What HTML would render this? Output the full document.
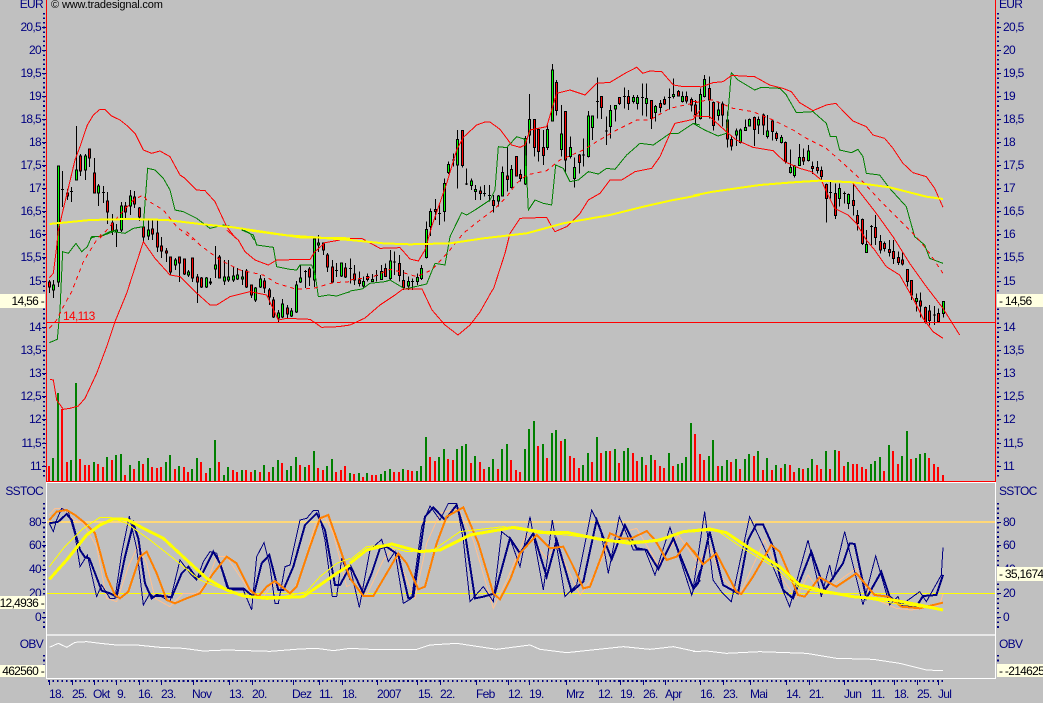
<!DOCTYPE html>
<html><head><meta charset="utf-8"><title>Chart</title>
<style>
html,body{margin:0;padding:0;background:#c0c0c0;width:1043px;height:703px;overflow:hidden}
svg{display:block;position:absolute;left:0;top:0}
path,polyline,line{vector-effect:non-scaling-stroke;shape-rendering:crispEdges}
polyline{fill:none}
text{font-family:"Liberation Sans",Arial,sans-serif;font-size:12px;letter-spacing:-.7px;fill:#000080}
.l text,.l{text-anchor:end}
.b text{fill:#000}
.d{stroke-dasharray:4 4}
</style></head><body>
<svg width="1043" height="703" viewBox="0 0 1043 703" xmlns="http://www.w3.org/2000/svg">
<rect width="1043" height="703" fill="#c0c0c0"/>

<!-- volume -->
<g fill="none" stroke-width="2">
<path stroke="#ff0000" d="M49 466V481M62 409V481M67 462V481M80 459V481M85 465V481M89 465V481M98 464V481M103 467V481M112 460V481M125 475V481M134 469V481M143 464V481M152 467V481M157 468V481M161 467V481M175 469V481M184 467V481M188 472V481M201 462V481M206 473V481M219 462V481M233 470V481M237 472V481M246 470V481M251 472V481M260 472V481M269 472V481M282 463V481M300 465V481M309 465V481M318 468V481M323 470V481M336 472V481M341 470V481M345 466V481"/>
<path stroke="#008000" d="M53 458V481M58 393V481M71 460V481M76 383V481M94 462V481M107 457V481M116 455V481M121 454V481M130 465V481M139 461V481M148 458V481M166 462V481M170 455V481M179 466V481M192 469V481M197 458V481M210 468V481M215 440V481M224 475V481M228 467V481M242 470V481M255 470V481M264 465V481M273 467V481M278 460V481M287 470V481M291 466V481M296 457V481M305 467V481M314 451V481M327 466V481M332 459V481"/>
<g transform="translate(350 380) scale(.33333)">
<path stroke="#008000" d="M0 279V303M27 279V303M51 279V303M93 282V303M105 273V303M120 267V303M159 267V303M201 273V303M213 258V303M228 171V303M267 231V303M282 207V303M321 207V303M336 198V303M348 192V303M375 228V303M417 261V303M429 237V303M456 207V303M471 192V303M525 207V303M537 147V303M552 123V303M579 192V303M606 159V303M618 150V303M645 177V303M699 255V303M714 219V303M741 171V303M768 213V303M795 207V303M822 213V303M834 204V303M876 231V303M903 225V303M957 219V303M984 252V303M996 249V303M1008 231V303M1023 129V303"/>
<path stroke="#ff0000" d="M12 282V303M39 291V303M66 285V303M78 285V303M132 276V303M147 276V303M174 270V303M186 273V303M240 231V303M255 243V303M294 237V303M309 240V303M363 249V303M390 246V303M402 267V303M444 267V303M483 240V303M498 270V303M510 276V303M564 198V303M591 234V303M633 183V303M660 228V303M672 234V303M687 264V303M726 246V303M753 219V303M780 213V303M807 249V303M849 219V303M861 243V303M888 255V303M915 240V303M930 258V303M942 264V303M969 258V303M1035 162V303"/>
</g>
<g transform="translate(693 380) scale(.33333)">
<path stroke="#ff0000" d="M21 222V303M33 240V303M75 258V303M114 246V303M141 267V303M183 228V303M210 270V303M237 270V303M264 264V303M291 255V303M303 276V303M330 267V303M372 255V303M384 267V303M411 267V303M438 213V303M453 258V303M480 252V303M492 252V303M507 261V303M519 267V303M573 273V303M600 213V303M615 252V303M654 237V303M708 234V303M723 252V303M735 261V303M750 285V303"/>
<path stroke="#008000" d="M48 228V303M60 180V303M87 258V303M102 240V303M129 237V303M156 237V303M168 222V303M195 213V303M222 234V303M249 255V303M276 252V303M318 264V303M345 264V303M357 237V303M399 213V303M426 210V303M465 246V303M534 252V303M546 243V303M561 231V303M588 195V303M627 228V303M642 153V303M669 234V303M681 222V303M696 219V303"/>
</g>
</g>

<!-- candles: section A -->
<g stroke="#000" stroke-width="1">
<path fill="none" d="M49.5 280V293M53.5 280V298M58.5 166V287M62.5 171V207M61 189.5h3M67.5 189V200M71.5 187V202M70 191.5h3M76.5 126V180M80.5 154V176M85.5 154V180M89.5 149V167M94.5 158V193M98.5 184V206M103.5 186V203M102 192.5h3M107.5 192V224M112.5 214V235M116.5 224V247M121.5 202V232M125.5 202V218M130.5 190V215M134.5 191V208M139.5 207V221M143.5 220V243M148.5 220V240M152.5 220V240M157.5 220V252M161.5 237V258M166.5 248V262M170.5 257V275M175.5 258V270M179.5 257V282M184.5 259V275M188.5 270V277M192.5 258V282M197.5 274V303M201.5 277V288M206.5 277V288M210.5 278V285M215.5 246V278M219.5 255V278M224.5 260V285M228.5 260V282M233.5 267V282M237.5 268V280M242.5 270V285M246.5 269V288M251.5 285V298M255.5 287V302M260.5 275V288M264.5 278V293M269.5 288V305M273.5 297V318M278.5 310V322M282.5 299V318M287.5 305V318M291.5 308V317M296.5 281V313M300.5 265V283M305.5 270V288M304 271.5h3M309.5 267V286M314.5 239V287M318.5 235V252M323.5 243V255M327.5 253V272M332.5 260V283M336.5 263V277M335 270.5h3M341.5 263V277M345.5 263V278"/>
<path fill="#ff0000" d="M48.5 282h2V287h-2zM66.5 193h2V196h-2zM79.5 156h2V171h-2zM88.5 149h2V158h-2zM93.5 173h2V193h-2zM106.5 201h2V212h-2zM111.5 223h2V231h-2zM124.5 206h2V212h-2zM133.5 197h2V204h-2zM138.5 208h2V217h-2zM142.5 227h2V237h-2zM151.5 229h2V234h-2zM156.5 233h2V247h-2zM160.5 246h2V251h-2zM165.5 251h2V253h-2zM169.5 257h2V272h-2zM178.5 257h2V263h-2zM183.5 259h2V274h-2zM191.5 258h2V278h-2zM196.5 277h2V282h-2zM200.5 278h2V287h-2zM218.5 257h2V278h-2zM245.5 271h2V287h-2zM250.5 285h2V295h-2zM263.5 281h2V288h-2zM268.5 290h2V297h-2zM272.5 300h2V317h-2zM286.5 308h2V314h-2zM308.5 269h2V277h-2zM322.5 243h2V250h-2zM326.5 255h2V267h-2zM331.5 267h2V282h-2zM344.5 268h2V277h-2z"/>
<path fill="#00ff00" d="M52.5 285h2V290h-2zM57.5 166h2V282h-2zM75.5 170h2V180h-2zM84.5 156h2V170h-2zM97.5 186h2V193h-2zM115.5 230h2V232h-2zM120.5 206h2V230h-2zM129.5 196h2V206h-2zM147.5 230h2V236h-2zM174.5 260h2V265h-2zM187.5 272h2V275h-2zM205.5 278h2V287h-2zM209.5 282h2V283h-2zM214.5 265h2V269h-2zM223.5 277h2V281h-2zM227.5 277h2V280h-2zM232.5 276h2V280h-2zM236.5 275h2V279h-2zM241.5 277h2V279h-2zM254.5 288h2V300h-2zM259.5 279h2V287h-2zM277.5 313h2V318h-2zM281.5 304h2V317h-2zM290.5 311h2V316h-2zM295.5 285h2V312h-2zM299.5 278h2V282h-2zM313.5 239h2V280h-2zM317.5 243h2V245h-2zM340.5 263h2V276h-2z"/>

<!-- section B -->
<g transform="translate(0 50) scale(1 .33333)">
<path fill="none" d="M350.5 625V700M349 655h3M354.5 645V705M359.5 665V710M363.5 680V715M367.5 670V695M372.5 672V695M376.5 660V695M375 677h3M381.5 645V690M385.5 640V680M390.5 600V690M394.5 605V675M393 636h3M399.5 615V695M403.5 660V720M408.5 680V720M412.5 685V720M411 695h3M417.5 670V705M421.5 645V690M426.5 515V625M430.5 475V558M435.5 447V510M439.5 465V525M438 490h3M444.5 385V515M448.5 335V372M453.5 310V350M452 330h3M457.5 240V415M462.5 240V352M466.5 355V405M465 402h3M471.5 385V420M475.5 405V450M480.5 410V450M484.5 405V440M483 430h3M489.5 405V455M488 437h3M493.5 435V488M498.5 435V470M502.5 350V440M507.5 290V425M511.5 345V415M516.5 320V380M520.5 358V395M525.5 258V405M529.5 132V280M534.5 208V320M538.5 238V335M543.5 240V345M547.5 225V300M552.5 42V215M556.5 90V197M561.5 165V320M565.5 185V370M570.5 260V325M574.5 322V412M579.5 312V370M583.5 265V350M582 315h3M588.5 183V322M592.5 198V270M597.5 82V205M596 155h3M601.5 140V207M606.5 200V285M605 243h3M610.5 165V265M615.5 165V215M619.5 143V165M624.5 112V175M623 140h3M628.5 120V180M633.5 135V160M637.5 135V178M642.5 100V197M641 142h3M646.5 100V200M651.5 150V237M655.5 165V215M660.5 150V187M664.5 140V165M669.5 115V178M668 142h3M673.5 85V145M678.5 120V140M682.5 125V158M686.5 125V160M691.5 143V185M695.5 150V225"/>
<path fill="#ff0000" d="M353.5 672h2V690h-2zM358.5 690h2V700h-2zM366.5 680h2V688h-2zM384.5 655h2V680h-2zM398.5 640h2V677h-2zM402.5 692h2V712h-2zM434.5 478h2V485h-2zM461.5 242h2V347h-2zM479.5 423h2V430h-2zM492.5 452h2V467h-2zM506.5 378h2V388h-2zM515.5 320h2V378h-2zM519.5 373h2V385h-2zM533.5 208h2V292h-2zM537.5 238h2V304h-2zM542.5 292h2V317h-2zM555.5 97h2V182h-2zM564.5 185h2V330h-2zM578.5 315h2V338h-2zM600.5 140h2V172h-2zM618.5 143h2V160h-2zM627.5 140h2V160h-2zM650.5 152h2V205h-2zM659.5 160h2V172h-2zM663.5 148h2V162h-2zM677.5 125h2V138h-2zM685.5 140h2V153h-2zM690.5 148h2V165h-2zM694.5 165h2V193h-2z"/>
<path fill="#00ff00" d="M362.5 695h2V708h-2zM371.5 688h2V695h-2zM380.5 665h2V688h-2zM389.5 633h2V685h-2zM407.5 695h2V708h-2zM416.5 682h2V695h-2zM420.5 655h2V685h-2zM425.5 538h2V622h-2zM429.5 485h2V530h-2zM443.5 400h2V485h-2zM447.5 343h2V368h-2zM456.5 268h2V345h-2zM470.5 393h2V407h-2zM474.5 418h2V425h-2zM497.5 438h2V453h-2zM501.5 367h2V438h-2zM510.5 358h2V413h-2zM524.5 265h2V402h-2zM528.5 208h2V255h-2zM546.5 238h2V292h-2zM551.5 60h2V213h-2zM560.5 252h2V298h-2zM569.5 292h2V320h-2zM573.5 352h2V385h-2zM587.5 198h2V320h-2zM591.5 198h2V233h-2zM609.5 182h2V230h-2zM614.5 167h2V177h-2zM632.5 142h2V155h-2zM636.5 142h2V160h-2zM645.5 145h2V160h-2zM654.5 170h2V187h-2zM672.5 133h2V140h-2zM681.5 140h2V155h-2z"/>
</g>

<!-- section C -->
<g transform="translate(0 60) scale(1 .33333)">
<path fill="none" d="M700.5 85V178M704.5 45V112M709.5 50V175M713.5 125V212M718.5 125V182M722.5 125V200M727.5 155V263M731.5 230V272M736.5 205V258M740.5 205V250M745.5 178V212M749.5 175V200M754.5 170V258M758.5 170V222M763.5 160V225M767.5 165V235M772.5 180V242M776.5 215V243M781.5 225V250M785.5 245V310M790.5 268V340M794.5 315V352M799.5 252V318M803.5 265V315M808.5 255V305M812.5 305V342M817.5 303V340M821.5 320V360M826.5 370V488M830.5 360V415M829 398h3M835.5 370V477M839.5 370V440M844.5 395V430M843 400h3M848.5 400V447M853.5 370V467M857.5 450V512M862.5 475V555M866.5 510V578M871.5 495V555M870 500h3M875.5 465V555M880.5 525V580M884.5 545V575M889.5 540V590M893.5 540V612M898.5 575V615M902.5 578V616M907.5 628V680M911.5 662V720M916.5 700V755M920.5 697V773M925.5 740V790M929.5 735V797M934.5 738V795M933 765h3M938.5 745V787M943.5 725V772"/>
<path fill="#ff0000" d="M708.5 85h2V120h-2zM712.5 127h2V197h-2zM721.5 132h2V165h-2zM726.5 180h2V237h-2zM730.5 238h2V258h-2zM753.5 172h2V208h-2zM762.5 165h2V195h-2zM771.5 183h2V215h-2zM775.5 220h2V235h-2zM784.5 247h2V305h-2zM802.5 293h2V303h-2zM811.5 320h2V326h-2zM816.5 322h2V332h-2zM820.5 332h2V350h-2zM825.5 373h2V415h-2zM834.5 400h2V467h-2zM852.5 422h2V437h-2zM856.5 467h2V490h-2zM861.5 478h2V550h-2zM874.5 503h2V532h-2zM879.5 545h2V570h-2zM883.5 550h2V565h-2zM888.5 568h2V578h-2zM892.5 575h2V595h-2zM897.5 593h2V607h-2zM901.5 600h2V612h-2zM906.5 628h2V665h-2zM910.5 662h2V705h-2zM919.5 723h2V738h-2zM924.5 742h2V785h-2zM928.5 753h2V782h-2zM937.5 760h2V785h-2z"/>
<path fill="#00ff00" d="M699.5 103h2V175h-2zM703.5 58h2V110h-2zM717.5 150h2V167h-2zM735.5 213h2V225h-2zM739.5 210h2V248h-2zM744.5 202h2V212h-2zM748.5 178h2V198h-2zM757.5 178h2V195h-2zM766.5 213h2V230h-2zM780.5 232h2V248h-2zM789.5 322h2V337h-2zM793.5 318h2V347h-2zM798.5 293h2V317h-2zM807.5 273h2V302h-2zM838.5 385h2V415h-2zM847.5 403h2V430h-2zM865.5 553h2V577h-2zM915.5 715h2V725h-2zM942.5 725h2V760h-2z"/>
</g>
</g>

<!-- price overlays: green -->
<g stroke="#008000" stroke-width="1" fill="none">
<polyline transform="translate(0 230) scale(.33333)" points="148,338 172,328 180,240 188,65 205,70 228,40 245,65 262,50 275,20 300,20 330,5 350,0"/>
<polyline transform="scale(.33333)" points="270,715 285,710 300,710 340,695 375,700 400,685 430,680 435,610 443,505 465,510 490,535 510,570 525,630 550,635 590,655 630,685 670,675 720,685 750,700 762,720"/>
<polyline transform="translate(0 230) scale(.33333)" points="725,0 760,15 770,45 820,52 830,110 870,118 890,120 900,105 935,105 945,130 955,200 985,195 1010,198 1050,185"/>
<polyline points="350,291 362,289"/>
<polyline transform="translate(350 50) scale(.33333)" points="35,718 60,700 105,695 120,690 150,708 165,717 230,702 255,640 285,645 300,560 335,488 350,495 375,480 420,450 435,420 445,290 470,293 500,260 525,268 535,480 555,450 580,460 605,465 617,345 640,355 660,395 685,390 715,365 745,372 770,355 795,358 830,315 870,280 910,285 960,250 985,250 1030,220 1050,225"/>
<polyline transform="translate(693 60) scale(.33333)" points="0,190 35,210 75,228 100,220 115,38 135,60 185,90 205,82 260,85 280,105 310,158 360,155 400,190 412,230 430,230 440,270 475,278 495,268 510,290 520,340 560,345 590,385 640,440 665,530 695,555 710,595 750,610"/>
</g>
<!-- price overlays: red -->
<g stroke="#ff0000" stroke-width="1" fill="none">
<polyline transform="scale(.33333)" points="175,690 225,480 240,440 262,375 280,345 300,328 315,328 335,348 360,360 385,380 405,400 430,450 455,460 480,453 510,470 540,525 555,535 590,570 615,572 645,605 680,680 707,715"/>
<polyline transform="translate(0 230) scale(.33333)" points="148,143 160,130 170,50 175,0"/>
<polyline transform="translate(0 230) scale(.33333)" points="680,0 715,30 735,65 765,90 805,105 830,90 930,88 945,65 975,38 1020,30 1050,28"/>
<polyline transform="translate(350 50) scale(.33333)" points="0,565 35,565 90,595 150,593 180,627 205,633 225,600 245,530 290,400 320,300 340,262 380,225 405,216 420,216 450,238 485,285 510,292 525,285 540,240 590,230 605,180 620,130 660,120 705,135 740,100 780,97 825,70 860,52 878,70 900,63 935,65 970,105 1000,110 1050,110"/>
<polyline transform="translate(693 60) scale(.33333)" points="21,82 60,68 90,65 115,47 130,47 185,50 230,75 270,85 295,95 320,128 360,152 400,135 428,130 480,183 520,200 540,225 575,235 600,265 630,310 660,338 700,350 725,385 750,442"/>
<polyline transform="translate(0 230) scale(.33333)" points="150,448 160,450 170,510 190,538 210,535 235,528 255,505 290,430 320,350 345,275 380,190 430,35 465,85 510,135 540,140 580,180 630,225 650,225 690,200 750,185 800,195 835,270 860,265 930,268 965,292 1015,290 1050,285"/>
<polyline points="350,325 365,318 380,305 395,295 403,289 422,289 432,310 445,325 458,335 470,325 480,312 493,289"/>
<polyline transform="translate(350 50) scale(.33333)" points="430,718 465,610 480,550 510,505 590,502 605,530 615,545 650,530 690,490 715,450 750,430 780,390 815,390 855,365 905,355 930,320 965,240 975,220 1030,208 1050,180"/>
<polyline transform="translate(693 60) scale(.33333)" points="0,168 50,170 100,215 130,240 180,262 240,272 275,305 320,325 355,335 385,360 400,395 425,445 465,465 490,490 520,540 545,570 580,620 620,645 660,715 690,775 720,815 750,835"/>
<polyline transform="translate(693 60) scale(.33333)" points="480,370 550,460 600,530 650,610 700,680 750,745 800,825"/>
<g class="d">
<polyline class="d" transform="translate(0 230) scale(.33333)" points="148,295 170,270 190,230 215,185 250,95 290,30 310,5"/>
<polyline class="d" transform="scale(.33333)" points="300,715 345,660 400,600 430,585 440,600 490,630 530,680 580,720"/>
<polyline class="d" transform="translate(0 230) scale(.33333)" points="560,5 600,45 660,90 720,120 790,135 830,160 890,178 940,175 1000,158 1050,155"/>
<polyline class="d" transform="translate(350 50) scale(.33333)" points="0,690 70,680 120,658 150,665 200,680 245,660 300,600 340,550 390,510 430,480 470,440 500,400 530,375 590,362 630,330 700,300 740,275 800,240 860,210 900,210 960,175 1050,155"/>
<polyline class="d" transform="translate(693 60) scale(.33333)" points="0,125 60,120 120,145 180,155 240,180 300,210 340,235 400,265 450,310 500,355 560,420 620,480 670,530 710,580 750,640"/>
</g>
</g>
<!-- yellow MA -->
<g stroke="#ffff00" stroke-width="2" fill="none">
<polyline transform="scale(.33333)" points="148,672 200,667 270,660 390,657 500,660 600,672 700,682 800,697 900,712 1050,715"/>
<polyline transform="translate(0 230) scale(.33333)" points="740,0 850,15 1050,30"/>
<polyline transform="translate(350 50) scale(.33333)" points="0,570 100,580 180,583 300,580 400,565 530,550 640,520 780,495 880,470 960,452 1050,435"/>
<polyline transform="translate(693 60) scale(.33333)" points="0,407 60,395 200,375 300,367 380,362 480,367 590,382 700,410 750,417"/>
</g>

<!-- frame lines -->
<g fill="none">
<path stroke="#fff" stroke-width="1" d="M46.5 481V678M995.5 481V678M46 482.5H996M46 678.5H996"/>
<path stroke="#e8e8e8" stroke-width="2" d="M47 635H995"/>
<path stroke="#ff0000" stroke-width="1" d="M46.5 0V481M995.5 0V481M46 481.5H996M46 322.5H996"/>
<path stroke="#ffd878" stroke-width="2" d="M47 522H995"/>
<path stroke="#ffff00" stroke-width="1" d="M47 593.5H995"/>
</g>

<!-- stochastic -->
<g fill="none">
<g stroke="#ffc090" stroke-width="1">
<polyline transform="translate(0 470) scale(.33333)" points="148,135 165,115 190,115 215,145 250,160 290,230 320,385 350,395 385,290 415,225 440,280 465,385 510,410 550,370 590,370 620,340 650,260 680,260 720,320 760,380 790,380 820,340 860,360 880,365 910,290 945,165 975,140 1000,190 1040,350 1050,345"/>
<polyline transform="translate(350 470) scale(.33333)" points="0,295 50,375 100,270 130,235 195,385 230,220 270,130 325,115 370,210 430,415 475,320 530,190 590,265 620,225 690,375 730,320 790,195 860,175 925,285 985,195 1045,280"/>
<polyline transform="translate(693 470) scale(.33333)" points="0,300 50,230 85,320 140,375 215,210 270,330 310,385 345,315 385,370 490,295 540,385 610,415 655,420 740,405 750,372"/>
</g>
<g stroke="#000080" stroke-width="1">
<polyline transform="translate(0 470) scale(.33333)" points="148,160 160,185 170,150 185,115 205,125 225,195 240,290 262,255 290,380 305,345 330,385 345,385 365,250 388,138 410,235 430,405 450,370 460,380 485,380 510,395 540,270 570,310 590,330 610,275 630,245 650,250 680,350 700,360 730,360 755,420 770,260 792,218 810,290 825,400 835,400 855,290 870,285 900,150 920,145 940,122 955,122 975,210 997,380 1010,380 1025,265 1050,330"/>
<polyline transform="translate(350 470) scale(.33333)" points="0,290 28,412 60,240 95,208 115,275 135,245 160,400 185,385 215,170 240,108 270,150 295,100 320,100 340,210 360,395 400,350 430,395 455,185 480,205 510,290 540,140 580,360 607,150 645,380 680,345 725,120 750,170 775,310 808,140 850,240 885,240 915,315 960,172 1025,375 1050,300"/>
<polyline transform="translate(693 470) scale(.33333)" points="0,360 35,125 60,330 85,365 115,395 170,140 240,290 290,410 345,210 385,380 410,285 420,330 455,185 510,405 548,258 590,405 615,380 625,405 680,365 700,395 745,315 750,232"/>
</g>
<g stroke="#000080" stroke-width="2">
<polyline transform="translate(0 470) scale(.33333)" points="148,160 175,155 200,132 215,150 240,240 255,262 268,265 305,362 330,370 350,380 375,260 400,160 415,205 435,340 455,385 470,375 515,382 545,310 565,290 590,325 605,315 640,245 660,280 685,355 730,355 760,380 785,280 808,255 835,360 850,360 880,290 915,165 950,130 975,180 1005,345 1020,345 1050,290"/>
<polyline transform="translate(350 470) scale(.33333)" points="0,285 40,370 65,310 90,235 110,230 145,255 175,385 190,380 225,140 250,112 285,150 320,105 345,190 375,385 400,380 435,370 480,205 510,250 550,190 590,320 620,210 665,365 700,335 740,150 785,268 825,165 860,235 890,240 925,297 970,205 1030,355 1050,330"/>
<polyline transform="translate(693 470) scale(.33333)" points="0,358 15,340 50,185 90,345 135,370 165,210 190,163 210,163 240,230 270,360 300,385 355,245 395,360 450,280 470,220 485,222 520,385 565,305 590,380 630,410 670,410 690,378 730,375 750,315"/>
</g>
<g stroke="#ff8000" stroke-width="2">
<polyline transform="translate(0 470) scale(.33333)" points="148,150 170,125 200,120 225,135 250,155 285,190 320,320 345,375 360,385 385,365 420,260 440,245 470,310 500,390 525,400 560,385 600,370 640,310 680,260 710,280 750,360 775,380 800,350 825,333 870,370 890,350 930,230 960,145 985,135 1020,235 1050,325"/>
<polyline transform="translate(350 470) scale(.33333)" points="0,325 40,378 70,378 110,310 145,250 170,280 205,358 225,350 260,220 290,140 340,112 385,220 430,370 450,388 480,330 510,250 560,195 600,235 640,230 670,290 700,355 720,350 750,270 780,190 815,205 845,205 890,183 915,210 950,270 980,260 1010,220 1050,270"/>
<polyline transform="translate(693 470) scale(.33333)" points="0,240 30,283 70,250 130,365 145,372 180,320 235,225 260,245 315,375 335,380 380,322 430,350 490,310 545,375 585,380 625,410 680,415 750,398"/>
</g>
<g stroke="#ffff00" stroke-width="1">
<polyline transform="translate(0 470) scale(.33333)" points="148,290 190,235 250,175 300,142 330,142 380,160 450,210 520,265 600,330 700,370 760,380 850,380 920,365 960,320 1010,280 1050,265"/>
<polyline transform="translate(350 470) scale(.33333)" points="0,270 50,230 100,225 170,245 250,240 330,185 460,170 570,190 650,195 770,210 900,215 1000,185 1050,180"/>
<polyline transform="translate(693 470) scale(.33333)" points="0,185 70,180 150,235 250,295 320,355 400,370 500,382 600,400 680,410 750,422"/>
</g>
<g stroke="#ffff00" stroke-width="3">
<polyline transform="translate(0 470) scale(.33333)" points="148,328 200,270 260,195 300,165 340,147 380,148 430,175 490,205 560,270 620,325 680,360 730,378 800,385 910,380 960,345 1010,310 1050,285"/>
<polyline transform="translate(350 470) scale(.33333)" points="0,280 50,240 125,222 210,245 270,240 360,195 490,172 580,187 650,187 750,208 840,220 930,210 1000,185 1050,180"/>
<polyline transform="translate(693 470) scale(.33333)" points="0,183 50,177 100,188 170,235 260,290 320,345 400,365 480,380 600,390 680,405 750,420"/>
</g>
<g stroke="#ffffff" stroke-width="1">
<polyline transform="translate(0 470) scale(.33333)" points="148,532 175,520 200,532 225,517 260,515 300,520 350,525 410,525 480,532 550,535 610,543 680,540 810,544 900,537 950,535 1000,542 1050,535"/>
<polyline transform="translate(350 470) scale(.33333)" points="0,535 60,538 200,538 240,525 320,520 440,538 540,525 570,538 650,548 820,530 900,538 970,530 1040,545 1050,545"/>
<polyline transform="translate(693 470) scale(.33333)" points="0,545 40,543 100,550 200,545 340,550 430,565 540,568 620,580 700,600 750,602"/>
</g>
</g>

<!-- ticks -->
<g fill="none" stroke="#000080">
<path stroke-width="2" stroke-dasharray="1.6 3.02" d="M44 12.8V478M998 12.8V478"/>
<path stroke-width="2" stroke-dasharray="1.6 3.14" d="M44 503V631M998 503V631M44 655V677M998 655V677"/>
<path stroke-width="1" d="M42 27.5h4M42 50.5h4M42 73.5h4M42 96.5h4M42 119.5h4M42 142.5h4M42 165.5h4M42 188.5h4M42 211.5h4M42 234.5h4M42 257.5h4M42 281.5h4M42 327.5h4M42 350.5h4M42 373.5h4M42 396.5h4M42 419.5h4M42 443.5h4M42 466.5h4M42 522.5h4M42 545.5h4M42 569.5h4M42 617.5h4M997 27.5h4M997 50.5h4M997 73.5h4M997 96.5h4M997 119.5h4M997 142.5h4M997 165.5h4M997 188.5h4M997 211.5h4M997 234.5h4M997 257.5h4M997 281.5h4M997 327.5h4M997 350.5h4M997 373.5h4M997 396.5h4M997 419.5h4M997 443.5h4M997 466.5h4M997 522.5h4M997 545.5h4M997 593.5h4M997 617.5h4"/>
<path stroke-width="2" stroke-dasharray="1.6 2.89" d="M48 681H945"/>
<path stroke-width="1" d="M49.5 680v5M72.5 680v5M94.5 680v5M116.5 680v5M139.5 680v5M161.5 680v5M193.5 680v5M229.5 680v5M252.5 680v5M293.5 680v5M319.5 680v5M342.5 680v5M377.5 680v5M417.5 680v5M440.5 680v5M476.5 680v5M508.5 680v5M529.5 680v5M566.5 680v5M598.5 680v5M620.5 680v5M643.5 680v5M665.5 680v5M700.5 680v5M723.5 680v5M750.5 680v5M786.5 680v5M809.5 680v5M844.5 680v5M871.5 680v5M894.5 680v5M917.5 680v5M938.5 680v5"/>
</g>

<!-- text -->
<text x="51" y="8" style="fill:#000;font-size:11px;letter-spacing:0">©</text>
<text x="62" y="8" style="fill:#000;font-size:11px;letter-spacing:-.17px">www.tradesignal.com</text>
<text x="63" y="320" style="fill:#ff0000">14,113</text>
<g class="l">
<text x="43" y="8">EUR</text><text x="41" y="31">20,5</text><text x="41" y="54">20</text><text x="41" y="77">19,5</text><text x="41" y="100">19</text><text x="41" y="123">18,5</text><text x="41" y="146">18</text><text x="41" y="169">17,5</text><text x="41" y="192">17</text><text x="41" y="215">16,5</text><text x="41" y="238">16</text><text x="41" y="261">15,5</text><text x="41" y="285">15</text><text x="41" y="331">14</text><text x="41" y="354">13,5</text><text x="41" y="377">13</text><text x="41" y="400">12,5</text><text x="41" y="423">12</text><text x="41" y="447">11,5</text><text x="41" y="470">11</text>
<text x="43" y="495">SSTOC</text><text x="41" y="526">80</text><text x="41" y="549">60</text><text x="41" y="573">40</text><text x="41" y="597">20</text><text x="41" y="621">0</text><text x="43" y="648">OBV</text>
</g>
<g>
<text x="999" y="8">EUR</text><text x="1003" y="31">20,5</text><text x="1003" y="54">20</text><text x="1003" y="77">19,5</text><text x="1003" y="100">19</text><text x="1003" y="123">18,5</text><text x="1003" y="146">18</text><text x="1003" y="169">17,5</text><text x="1003" y="192">17</text><text x="1003" y="215">16,5</text><text x="1003" y="238">16</text><text x="1003" y="261">15,5</text><text x="1003" y="285">15</text><text x="1003" y="331">14</text><text x="1003" y="354">13,5</text><text x="1003" y="377">13</text><text x="1003" y="400">12,5</text><text x="1003" y="423">12</text><text x="1003" y="447">11,5</text><text x="1003" y="470">11</text>
<text x="999" y="495">SSTOC</text><text x="1003" y="526">80</text><text x="1003" y="549">60</text><text x="1003" y="573">40</text><text x="1003" y="597">20</text><text x="1003" y="621">0</text><text x="999" y="648">OBV</text>
</g>

<!-- value boxes -->
<g fill="#ffffe1">
<rect x="0" y="294" width="45" height="14"/><rect x="0" y="596" width="45" height="13"/><rect x="0" y="665" width="45" height="12"/>
<rect x="997" y="294" width="46" height="13"/><rect x="997" y="567" width="46" height="14"/><rect x="997" y="664" width="46" height="13"/>
</g>
<g class="b">
<g class="l"><text x="44" y="305">14,56 -</text><text x="44" y="607">12,4936 -</text><text x="44" y="675">462560 -</text></g>
<text x="999" y="305">- 14,56</text><text x="999" y="578">- 35,1674</text><text x="999" y="675">- -214625</text>
</g>

<!-- dates -->
<g>
<text x="49" y="698">18.</text><text x="72" y="698">25.</text><text x="93" y="698">Okt</text><text x="117" y="698">9.</text><text x="138" y="698">16.</text><text x="161" y="698">23.</text><text x="192" y="698">Nov</text><text x="229" y="698">13.</text><text x="252" y="698">20.</text><text x="292" y="698">Dez</text><text x="319" y="698">11.</text><text x="342" y="698">18.</text><text x="377" y="698">2007</text><text x="418" y="698">15.</text><text x="440" y="698">22.</text><text x="476" y="698">Feb</text><text x="508" y="698">12.</text><text x="529" y="698">19.</text><text x="566" y="698">Mrz</text><text x="598" y="698">12.</text><text x="620" y="698">19.</text><text x="643" y="698">26.</text><text x="665" y="698">Apr</text><text x="700" y="698">16.</text><text x="723" y="698">23.</text><text x="750" y="698">Mai</text><text x="786" y="698">14.</text><text x="809" y="698">21.</text><text x="844" y="698">Jun</text><text x="871" y="698">11.</text><text x="894" y="698">18.</text><text x="917" y="698">25.</text><text x="938" y="698">Jul</text>
</g>
</svg>
</body></html>
